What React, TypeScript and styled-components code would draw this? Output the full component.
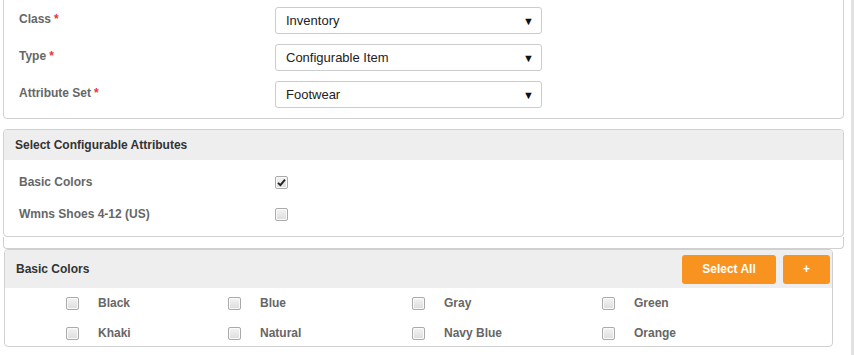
import styled, { createGlobalStyle } from 'styled-components';

const GlobalStyle = createGlobalStyle`
  html, body {
    margin: 0;
    padding: 0;
    background: #fff;
  }
  body {
    font-family: 'Liberation Sans', Arial, sans-serif;
    font-size: 12px;
    color: #333;
    overflow: hidden;
  }
`;

const Page = styled.div`
  display: flex;
  height: 355px;
  overflow: hidden;
`;

const Content = styled.div`
  width: 841px;
  padding-left: 3px;
  display: flex;
  flex-direction: column;
`;

const ScrollEdge = styled.div`
  width: 3px;
  margin-left: 7px;
  background: #e2e2e2;
`;

const Panel = styled.div<{ $top?: number; $inset?: number }>`
  border: 1px solid #d0d0d0;
  border-radius: 4px;
  background: #fff;
  margin-top: ${(p) => p.$top ?? 0}px;
  margin-left: ${(p) => p.$inset ?? 0}px;
  margin-right: ${(p) => (p.$inset ? 11 : 0)}px;
  overflow: hidden;
`;

const Sliver = styled.div`
  height: 11px;
  border: 1px solid #d0d0d0;
  border-top: none;
  border-radius: 0 0 4px 4px;
`;

const FormBody = styled.div`
  display: flex;
  flex-direction: column;
  gap: 10px;
  padding: 16px 0 10px 15px;
`;

const FormRow = styled.div`
  display: flex;
  align-items: flex-start;
  height: 27px;
`;

const Label = styled.div`
  width: 256px;
  padding-top: 5px;
  font-weight: bold;
  font-size: 12px;
  color: #666;
`;

const Required = styled.span`
  color: #e33;
  margin-left: 3px;
`;

const Select = styled.div`
  height: 25px;
  width: 248px;
  border: 1px solid #ccc;
  border-radius: 3px;
  display: flex;
  align-items: center;
  justify-content: space-between;
  padding: 0 7px 0 10px;
  box-sizing: content-box;
  font-size: 13px;
  color: #222;
`;

const Arrow = styled.span`
  font-size: 11px;
  color: #111;
`;

const PanelHeader = styled.div<{ $height: number }>`
  height: ${(p) => p.$height}px;
  background: #eeeeee;
  display: flex;
  align-items: center;
  justify-content: space-between;
  padding: 0 2px 0 11px;
`;

const HeaderTitle = styled.div`
  font-weight: bold;
  font-size: 12px;
  color: #333;
`;

const AttrBody = styled.div`
  display: flex;
  flex-direction: column;
  padding: 12px 0 12px 15px;
  gap: 12px;
`;

const AttrRow = styled.div`
  display: flex;
  align-items: center;
  height: 20px;
`;

const AttrLabel = styled.div`
  width: 256px;
  font-weight: bold;
  color: #666;
`;

const Box = styled.span`
  display: inline-flex;
  align-items: center;
  justify-content: center;
  width: 11px;
  height: 11px;
  border: 1px solid #aaa;
  border-radius: 2px;
  background: linear-gradient(#f4f4f4, #dcdcdc);
  box-shadow: inset 0 0 0 1px #fafafa;
  flex: none;
`;

const Buttons = styled.div`
  display: flex;
  gap: 7px;
`;

const OrangeButton = styled.button<{ $width: number }>`
  width: ${(p) => p.$width}px;
  height: 29px;
  border: none;
  border-radius: 3px;
  background: #f7931e;
  color: #fff;
  font-family: 'Liberation Sans', Arial, sans-serif;
  font-weight: bold;
  font-size: 12px;
  padding: 0;
`;

const ColorGrid = styled.div`
  display: grid;
  grid-template-columns: 162px 184px 190px 1fr;
  row-gap: 10px;
  padding: 5px 0 3px 61px;
`;

const ColorCell = styled.label`
  display: flex;
  align-items: center;
  gap: 19px;
  height: 20px;
  font-weight: bold;
  color: #666;
`;

const Check = ({ checked }: { checked?: boolean }) => (
  <Box>
    {checked && (
      <svg width="9" height="9" viewBox="0 0 9 9">
        <path d="M1 4.8 L3.4 7.2 L8 1.6" stroke="#222" strokeWidth="1.9" fill="none" />
      </svg>
    )}
  </Box>
);

const fields = [
  { label: 'Class', value: 'Inventory' },
  { label: 'Type', value: 'Configurable Item' },
  { label: 'Attribute Set', value: 'Footwear' },
];

const colors = ['Black', 'Blue', 'Gray', 'Green', 'Khaki', 'Natural', 'Navy Blue', 'Orange'];

export default function App() {
  return (
    <Page>
      <GlobalStyle />
      <Content>
        <Panel $top={-10}>
          <FormBody>
            {fields.map((f) => (
              <FormRow key={f.label}>
                <Label>
                  {f.label}
                  <Required>*</Required>
                </Label>
                <Select>
                  {f.value}
                  <Arrow>▼</Arrow>
                </Select>
              </FormRow>
            ))}
          </FormBody>
        </Panel>

        <Panel $top={10}>
          <PanelHeader $height={30}>
            <HeaderTitle>Select Configurable Attributes</HeaderTitle>
          </PanelHeader>
          <AttrBody>
            <AttrRow>
              <AttrLabel>Basic Colors</AttrLabel>
              <Check checked />
            </AttrRow>
            <AttrRow>
              <AttrLabel>Wmns Shoes 4-12 (US)</AttrLabel>
              <Check />
            </AttrRow>
          </AttrBody>
        </Panel>
        <Sliver />

        <Panel $inset={1}>
          <PanelHeader $height={38}>
            <HeaderTitle>Basic Colors</HeaderTitle>
            <Buttons>
              <OrangeButton $width={94}>Select All</OrangeButton>
              <OrangeButton $width={47}>+</OrangeButton>
            </Buttons>
          </PanelHeader>
          <ColorGrid>
            {colors.map((c) => (
              <ColorCell key={c}>
                <Check />
                {c}
              </ColorCell>
            ))}
          </ColorGrid>
        </Panel>
      </Content>
      <ScrollEdge />
    </Page>
  );
}
